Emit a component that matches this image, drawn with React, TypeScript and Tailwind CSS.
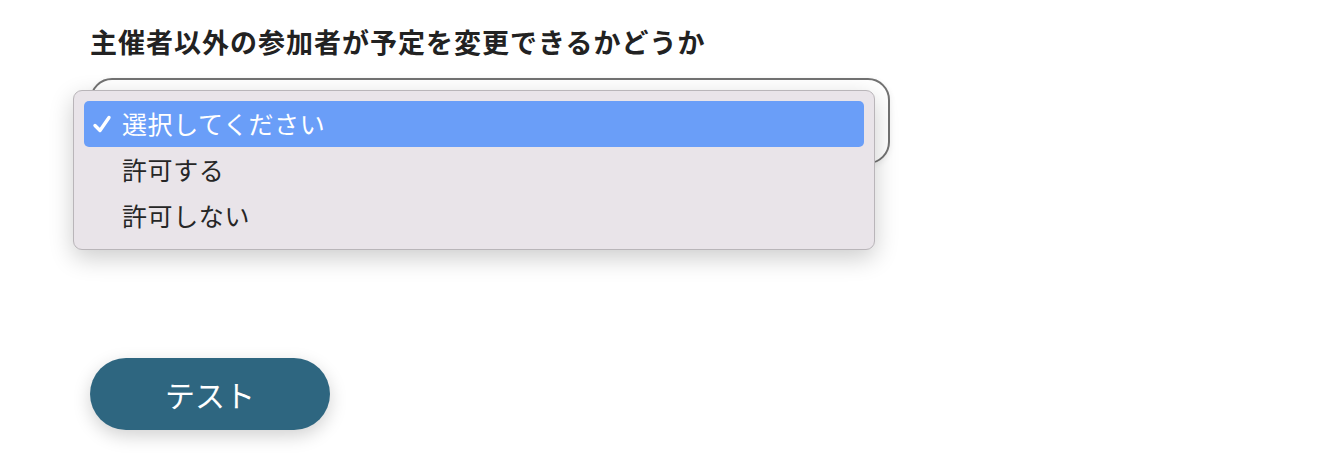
import type { FC } from 'react';

const options = ['選択してください', '許可する', '許可しない'];

const CheckMark: FC = () => (
  <svg viewBox="0 0 20 20" className="w-[20px] h-[20px]" fill="none">
    <path d="M3 11.5 L8 16.5 L17 3.5" stroke="white" strokeWidth="3.4" strokeLinecap="round" strokeLinejoin="round" />
  </svg>
);

const App: FC = () => {
  return (
    <div
      className="min-h-screen bg-white pl-[90px] pt-[24px]"
      style={{ fontFamily: '"Noto Sans CJK JP", "Noto Sans", sans-serif' }}
    >
      {/* Label */}
      <h2 className="text-[27px] leading-[36px] font-bold text-[#222] tracking-[1px]">
        主催者以外の参加者が予定を変更できるかどうか
      </h2>

      {/* Select with open menu */}
      <div className="relative mt-[18px] w-[800px]">
        <div className="h-[86px] rounded-[22px] border-2 border-[#727272] bg-white shadow-[0_2px_6px_rgba(0,0,0,0.08)]" />

        <div className="absolute left-[-17px] top-[12px] w-[802px] rounded-[9px] border border-[#b9b5b9] bg-[#e9e4e9] p-[10px] shadow-[0_8px_24px_rgba(0,0,0,0.2)]">
          {options.map((opt, i) => (
            <div
              key={opt}
              className={
                i === 0
                  ? 'flex h-[46px] items-center rounded-[5px] bg-[#6a9ef8] pl-[8px] text-white'
                  : 'flex h-[46px] items-center pl-[8px] text-[#262626]'
              }
            >
              <span className="w-[30px] flex items-center">{i === 0 && <CheckMark />}</span>
              <span className="text-[25px] tracking-[0.6px]">{opt}</span>
            </div>
          ))}
        </div>
      </div>

      {/* Test button */}
      <button className="mt-[194px] h-[72px] w-[240px] rounded-full bg-[#2e6680] text-[30px] text-white shadow-[0_6px_18px_rgba(0,0,0,0.18)]">
        テスト
      </button>
    </div>
  );
};

export default App;
